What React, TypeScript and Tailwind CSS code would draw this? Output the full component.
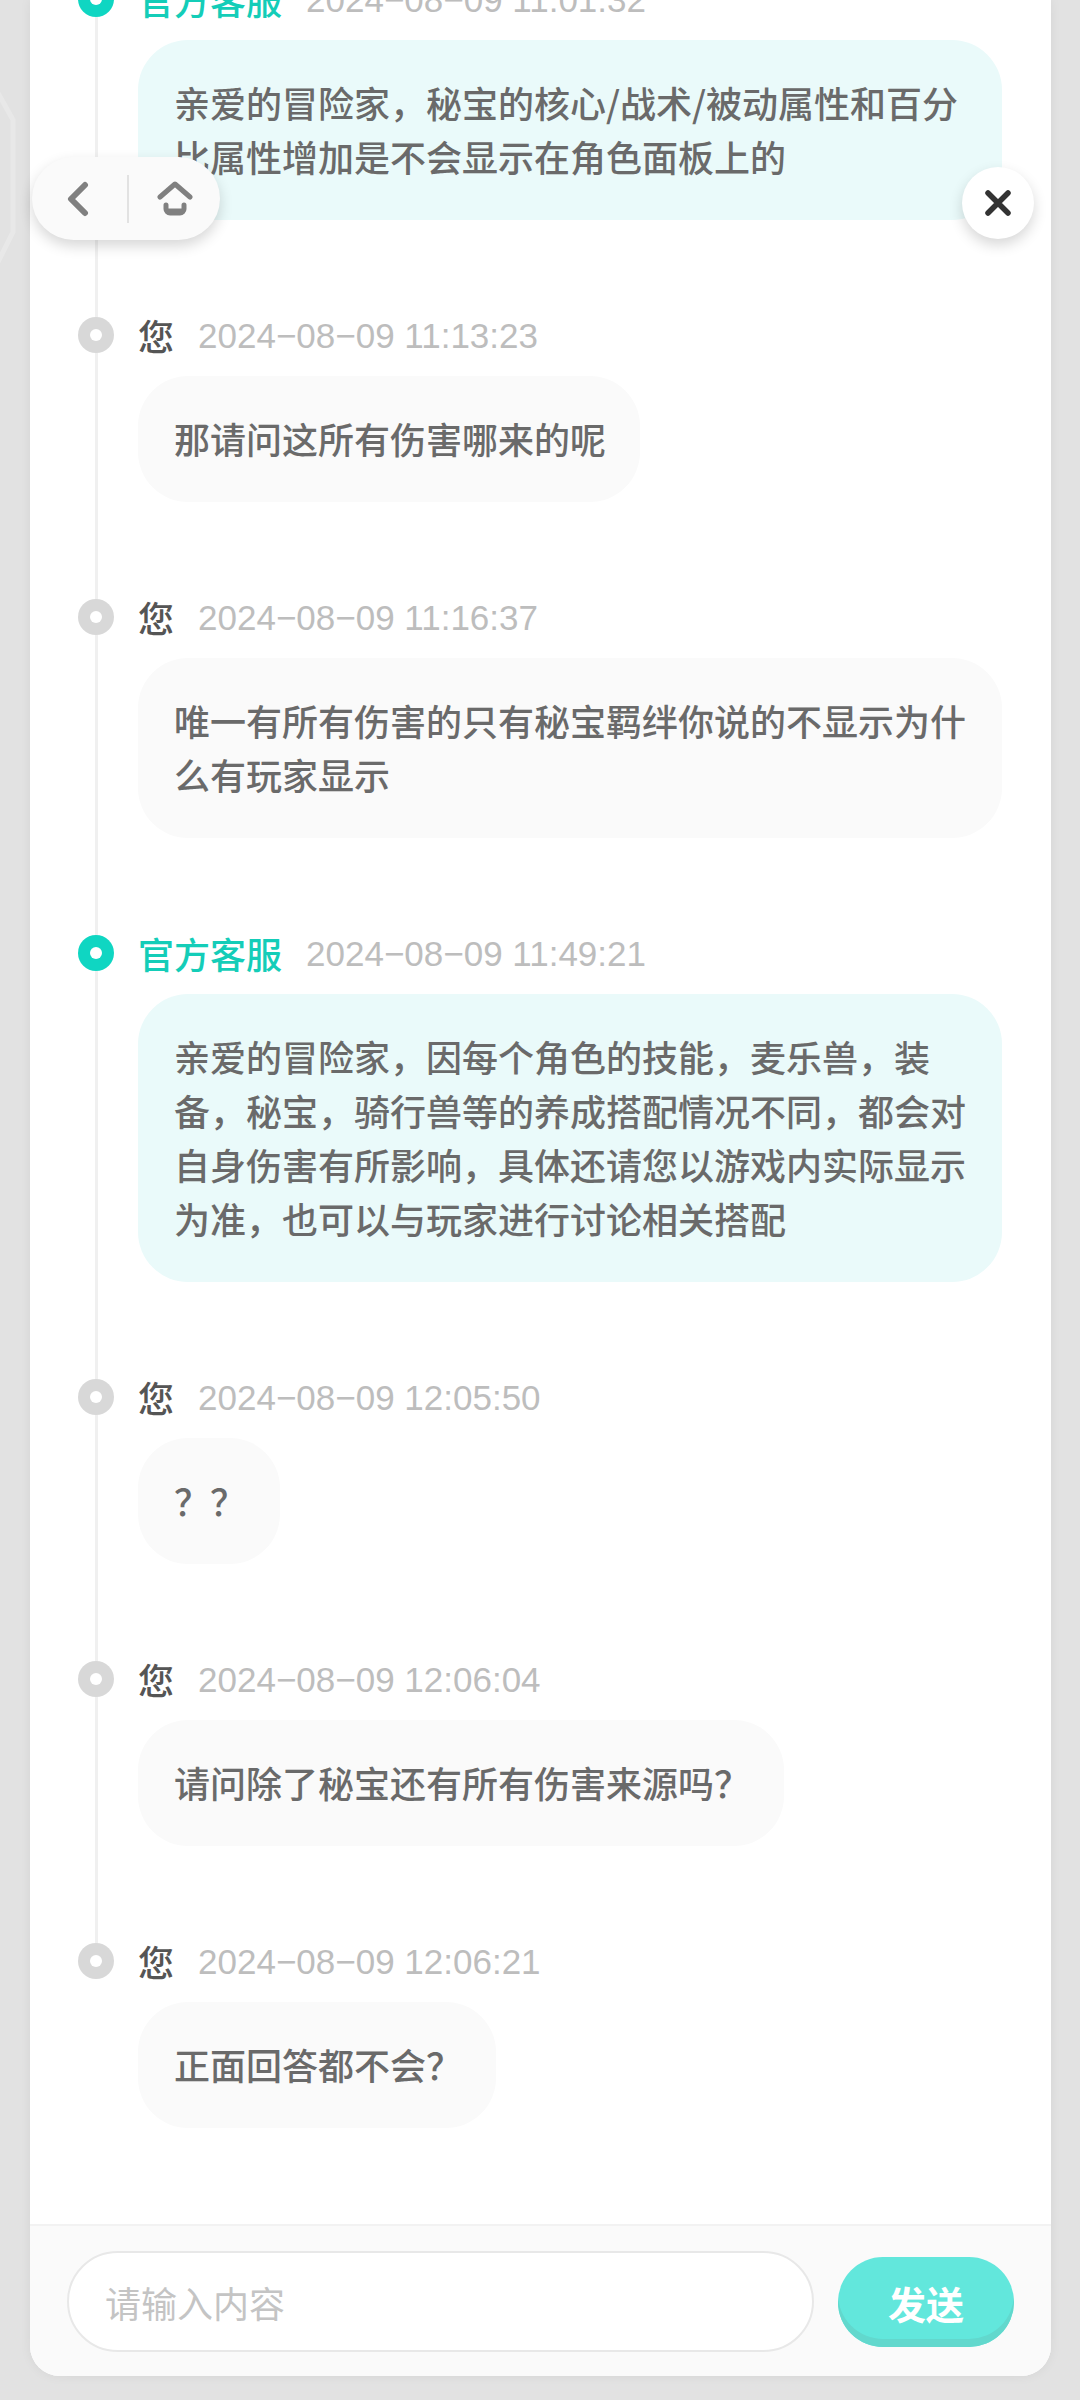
// Customer service ticket thread, scrolled mid-conversation.

type Msg = {
  staff?: boolean;
  time: string;
  text: string;
};

const messages: Msg[] = [
  {
    staff: true,
    time: '2024−08−09 11:01:32',
    text: '亲爱的冒险家，秘宝的核心/战术/被动属性和百分比属性增加是不会显示在角色面板上的',
  },
  { time: '2024−08−09 11:13:23', text: '那请问这所有伤害哪来的呢' },
  {
    time: '2024−08−09 11:16:37',
    text: '唯一有所有伤害的只有秘宝羁绊你说的不显示为什么有玩家显示',
  },
  {
    staff: true,
    time: '2024−08−09 11:49:21',
    text: '亲爱的冒险家，因每个角色的技能，麦乐兽，装备，秘宝，骑行兽等的养成搭配情况不同，都会对自身伤害有所影响，具体还请您以游戏内实际显示为准，也可以与玩家进行讨论相关搭配',
  },
  { time: '2024−08−09 12:05:50', text: '？？' },
  { time: '2024−08−09 12:06:04', text: '请问除了秘宝还有所有伤害来源吗？' },
  { time: '2024−08−09 12:06:21', text: '正面回答都不会？' },
];

function Message({ msg }: { msg: Msg }) {
  return (
    <div className="relative pb-[89px] pl-[108px]">
      <div
        className={`absolute left-[48px] top-[8px] flex h-[36px] w-[36px] items-center justify-center rounded-full ${
          msg.staff ? 'bg-[#0fd6c2]' : 'bg-[#d8d8d8]'
        }`}
      >
        <div className="h-[12px] w-[12px] rounded-full bg-white" />
      </div>
      <div className="flex h-[52px] items-center gap-[24px]">
        <span
          className={`text-[36px] font-medium ${msg.staff ? 'text-[#14cdb8]' : 'text-[#555]'}`}
        >
          {msg.staff ? '官方客服' : '您'}
        </span>
        <span className="pt-[2px] font-['Liberation_Sans','Noto_Sans_CJK_SC',sans-serif] text-[35px] text-[#bdbdbd]">
          {msg.time}
        </span>
      </div>
      <div
        className={`mt-[15px] w-fit max-w-[864px] rounded-[50px] pb-[37px] pl-[36px] pr-[34px] pt-[35px] text-[36px] font-medium leading-[54px] text-[#6a6a6a] ${
          msg.staff ? 'bg-[#eafafa]' : 'bg-[#fafafa]'
        }`}
      >
        {msg.text}
      </div>
    </div>
  );
}

export default function App() {
  return (
    <div className="relative h-[2400px] w-[1080px] overflow-hidden bg-[#e2e2e2] pb-[24px] pl-[30px] pr-[29px] font-['Noto_Sans_CJK_SC',sans-serif]">
      {/* sliver of the page frame behind the panel */}
      <svg className="absolute left-0 top-[90px]" width="20" height="180" fill="none" stroke="#e8e8e8" strokeWidth="5">
        <path d="M-2 3 13 30v112L-2 172" />
      </svg>

      <div className="relative flex h-full flex-col overflow-hidden rounded-b-[30px] bg-white shadow-[0_0_12px_rgba(0,0,0,0.06)]">
        <div className="relative min-h-0 flex-1 overflow-hidden">
          <div className="absolute left-[65px] top-0 h-[1950px] w-[3px] bg-[#f0f0f0]" />
          <div className="relative -mt-[27px]">
            {messages.map(m => (
              <Message key={m.time} msg={m} />
            ))}
          </div>
        </div>

        <div className="flex h-[152px] shrink-0 items-start gap-[24px] border-t-2 border-[#f2f2f2] bg-[#fafafa] pl-[37px] pr-[37px] pt-[25px]">
          <div className="flex h-[101px] flex-1 items-center rounded-full border-2 border-[#e8e8e8] bg-white px-[36px] text-[36px] text-[#c4c4c4]">
            请输入内容
          </div>
          <button className="mt-[6px] h-[90px] w-[176px] rounded-[45px] bg-[#62e7dc] text-[38px] font-bold text-white shadow-[inset_0_-8px_0_#62d8cd]">
            发送
          </button>
        </div>
      </div>

      <div className="absolute left-[32px] top-[157px] flex h-[83px] w-[188px] items-center rounded-full bg-[#fafafa] shadow-[0_6px_14px_rgba(0,0,0,0.16)]">
        <div className="flex flex-1 justify-center pr-[4px]">
          <svg width="24" height="36" viewBox="0 0 24 36" fill="none" stroke="#808080" strokeWidth="6" strokeLinecap="round" strokeLinejoin="round">
            <path d="M19 4 5 18l14 14" />
          </svg>
        </div>
        <div className="h-[48px] w-[2px] bg-[#e2e2e2]" />
        <div className="flex flex-1 justify-center">
          <svg width="36" height="36" viewBox="0 0 36 36" fill="none" stroke="#808080" strokeWidth="5" strokeLinecap="round" strokeLinejoin="round">
            <path d="M3 16 18 3l15 13" />
            <path d="M9 24v4a4 4 0 0 0 4 4h10a4 4 0 0 0 4-4v-4" />
            <path d="M11 30h14" strokeWidth="5" />
          </svg>
        </div>
      </div>

      <div className="absolute left-[962px] top-[167px] flex h-[72px] w-[72px] items-center justify-center rounded-full bg-white shadow-[0_6px_14px_rgba(0,0,0,0.16)]">
        <svg width="28" height="28" viewBox="0 0 28 28" fill="none" stroke="#333" strokeWidth="5.5" strokeLinecap="round">
          <path d="M4 4l20 20M24 4 4 24" />
        </svg>
      </div>
    </div>
  );
}
